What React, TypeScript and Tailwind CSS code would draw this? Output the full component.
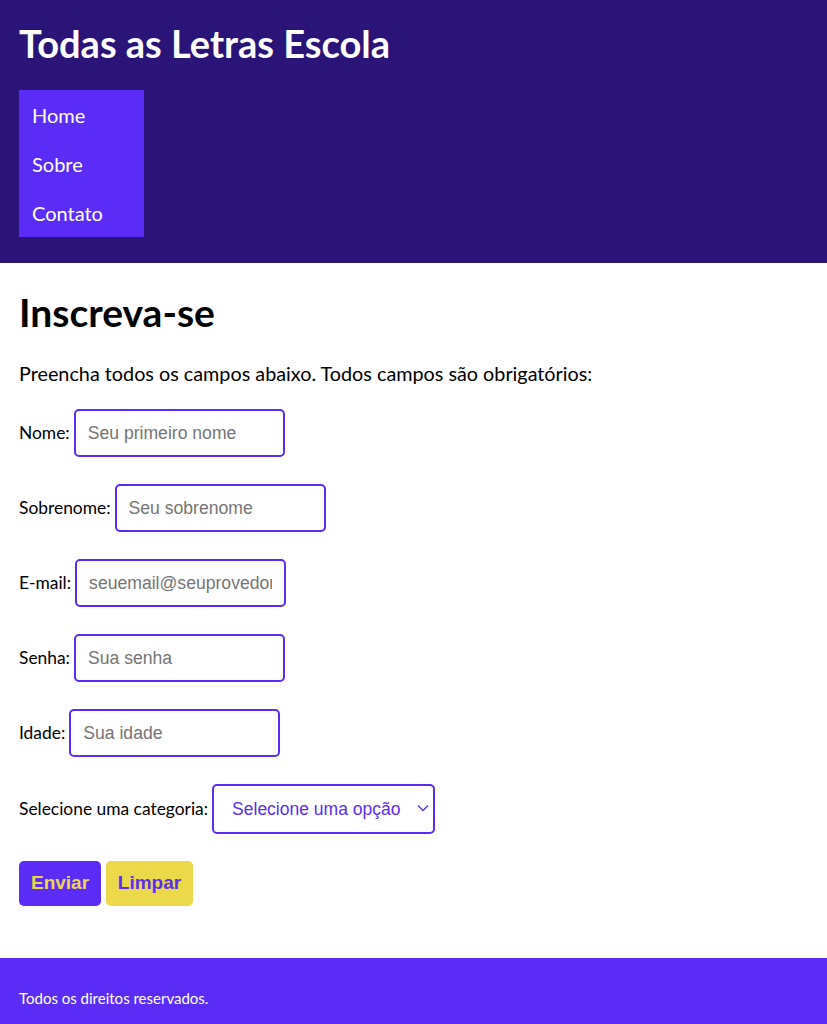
const fields = [
  { label: "Nome:", placeholder: "Seu primeiro nome", type: "text" },
  { label: "Sobrenome:", placeholder: "Seu sobrenome", type: "text" },
  { label: "E-mail:", placeholder: "seuemail@seuprovedor.com", type: "email" },
  { label: "Senha:", placeholder: "Sua senha", type: "password" },
  { label: "Idade:", placeholder: "Sua idade", type: "number" },
];

export default function App() {
  return (
    <div className="min-h-screen bg-white text-black font-['Lato','Noto_Sans',sans-serif]">
      <header className="bg-[#2b1477] px-[19px] pt-[22px] pb-[26px]">
        <h1 className="text-[38px] leading-[43px] font-bold text-white">Todas as Letras Escola</h1>
        <nav className="mt-[25px] w-[125px] bg-[#5a2cf6]">
          {["Home", "Sobre", "Contato"].map((item) => (
            <a key={item} href="#" className="block pl-[13px] pt-[13px] pb-[11px] text-[20px] leading-[25px] text-white">
              {item}
            </a>
          ))}
        </nav>
      </header>

      <main className="px-[19px] pt-[28px] pb-[52px]">
        <h2 className="text-[39px] leading-[43px] font-bold">Inscreva-se</h2>
        <p className="mt-[27px] text-[19.8px] leading-[25px]">
          Preencha todos os campos abaixo. Todos campos são obrigatórios:
        </p>
        <form className="mt-[23px] flex flex-col gap-[27px]">
          {fields.map((f) => (
            <div key={f.label} className="flex items-center gap-[4px]">
              <label className="text-[17.4px]">{f.label}</label>
              <input
                type={f.type}
                placeholder={f.placeholder}
                className="w-[211px] h-[48px] rounded-[5px] border-2 border-[#5a2cf6] px-[12px] text-[17.6px] font-['Liberation_Sans',Arial,sans-serif] placeholder:text-[#757575] outline-none"
              />
            </div>
          ))}
          <div className="flex items-center gap-[4px]">
            <label className="text-[17.4px]">Selecione uma categoria:</label>
            <div className="relative">
              <select className="appearance-none w-[223px] h-[50px] rounded-[5px] border-2 border-[#5a2cf6] pl-[18px] pr-[24px] text-[17.5px] text-[#5a2cf6] bg-white font-['Liberation_Sans',Arial,sans-serif] outline-none">
                <option>Selecione uma opção</option>
              </select>
              <svg
                className="absolute right-[6px] top-[20px] pointer-events-none"
                width="12"
                height="8"
                viewBox="0 0 12 8"
                fill="none"
              >
                <path d="M1 1.5 L6 6.5 L11 1.5" stroke="#5a2cf6" strokeWidth="1.3" />
              </svg>
            </div>
          </div>
          <div className="flex gap-[5px]">
            <button type="button" className="w-[82px] h-[45px] rounded-[5px] bg-[#5a2cf6] text-[#ecd94a] text-[19px] font-bold font-['Liberation_Sans',Arial,sans-serif]">
              Enviar
            </button>
            <button type="button" className="w-[87px] h-[45px] rounded-[5px] bg-[#ecd94a] text-[#5a2cf6] text-[19px] font-bold font-['Liberation_Sans',Arial,sans-serif]">
              Limpar
            </button>
          </div>
        </form>
      </main>

      <footer className="bg-[#5a2cf6] px-[19px] pt-[31px] pb-[40px]">
        <p className="text-[15px] leading-[18px] text-white">Todos os direitos reservados.</p>
      </footer>
    </div>
  );
}
